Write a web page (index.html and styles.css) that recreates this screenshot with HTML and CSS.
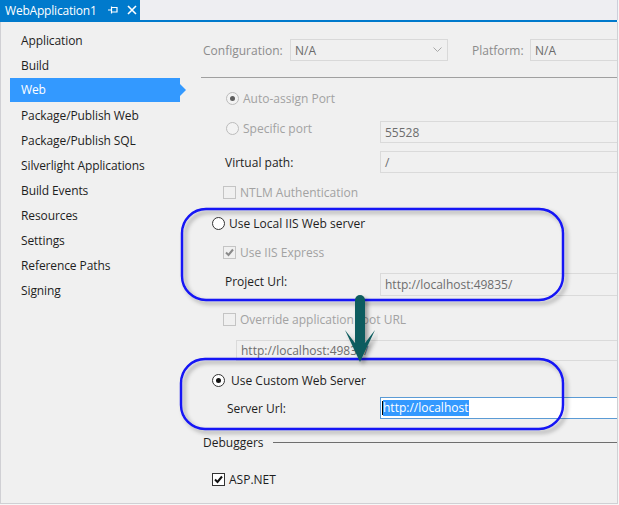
FILE: index.html
```html
<!DOCTYPE html>
<html>
<head>
<meta charset="utf-8">
<title>WebApplication1</title>
<link rel="stylesheet" href="styles.css">
</head>
<body>
<div class="page">
  <div class="tabbar">
    <div class="tab">
      <span class="tab-title">WebApplication1</span>
      <svg class="pin" width="10" height="10" viewBox="0 0 10 10"><path d="M0 5H3M3.5 1.5V8.5M4 2.5H9V7H4" fill="none" stroke="#fff" stroke-width="1.2"/></svg>
      <svg class="close" width="10" height="10" viewBox="0 0 10 10"><path d="M1 1L9 9M9 1L1 9" stroke="#fff" stroke-width="1.6"/></svg>
    </div>
  </div>
  <div class="tabline"></div>
  <div class="main">
    <nav class="side">
      <div class="item">Application</div>
      <div class="item">Build</div>
      <div class="item sel">Web</div>
      <div class="item">Package/Publish Web</div>
      <div class="item">Package/Publish SQL</div>
      <div class="item">Silverlight Applications</div>
      <div class="item">Build Events</div>
      <div class="item">Resources</div>
      <div class="item">Settings</div>
      <div class="item">Reference Paths</div>
      <div class="item">Signing</div>
    </nav>
    <section class="content">
      <div class="config">
        <span class="cfg-label">Configuration:</span>
        <div class="select cfg-select"><span>N/A</span>
          <svg width="9" height="6" viewBox="0 0 9 6"><path d="M0.5 0.5L4.5 4.5L8.5 0.5" fill="none" stroke="#a8a8a8" stroke-width="1"/></svg>
        </div>
        <span class="plat-label">Platform:</span>
        <div class="select plat-select"><span>N/A</span></div>
      </div>
      <div class="sep"></div>

      <div class="line m-auto ind-r"><span class="radio dis on"></span><span class="txt dis-t">Auto-assign Port</span></div>
      <div class="frow m-spec">
        <div class="line ind-r spec-l"><span class="radio dis"></span><span class="txt dis-t">Specific port</span></div>
        <div class="inp">55528</div>
      </div>
      <div class="frow m-virt">
        <div class="line ind-l">Virtual path:</div>
        <div class="inp">/</div>
      </div>
      <div class="line m-ntlm ind-c"><span class="check dis"></span><span class="txt2 dis-t">NTLM Authentication</span></div>
      <div class="line m-local ind-o"><span class="radio"></span><span class="txt">Use Local IIS Web server</span></div>
      <div class="line m-iis ind-c"><span class="check dis"><svg width="11" height="11" viewBox="0 0 11 11"><path d="M2 5.5L4.5 8L9 2.5" fill="none" stroke="#8a8a8a" stroke-width="2"/></svg></span><span class="txt2 dis-t">Use IIS Express</span></div>
      <div class="frow m-proj">
        <div class="line ind-l proj-l">Project Url:</div>
        <div class="inp tall">http://localhost:49835/</div>
      </div>
      <div class="line m-over ind-c"><span class="check dis"></span><span class="txt2 dis-t">Override application root URL</span></div>
      <div class="inp over-inp">http://localhost:49835/</div>
      <div class="line m-custom ind-o"><span class="radio on dark"></span><span class="txt3">Use Custom Web Server</span></div>
      <div class="frow m-server">
        <div class="line ind-s">Server Url:</div>
        <div class="inp active"><span class="caret"></span><span class="selected">http://localhost</span></div>
      </div>
      <div class="debug m-debug"><span>Debuggers</span><span class="dline"></span></div>
      <div class="line m-asp ind-a"><span class="check on"><svg width="11" height="11" viewBox="0 0 11 11"><path d="M2 5.5L4.5 8L9 2.5" fill="none" stroke="#111" stroke-width="2"/></svg></span><span class="txt">ASP.NET</span></div>
    </section>
  </div>
  <svg class="annot" width="619" height="505" viewBox="0 0 619 505">
    <defs>
      <filter id="sh" x="-10%" y="-20%" width="120%" height="140%">
        <feDropShadow dx="3" dy="3" stdDeviation="2" flood-color="#000" flood-opacity="0.35"/>
      </filter>
    </defs>
    <rect x="182" y="209" width="381" height="91" rx="24" fill="none" stroke="#1212f5" stroke-width="2.4" filter="url(#sh)"/>
    <rect x="181" y="359" width="382" height="70" rx="24" fill="none" stroke="#1212f5" stroke-width="2.4" filter="url(#sh)"/>
    <g filter="url(#sh)" fill="#0f5c5e">
      <rect x="355" y="295" width="10" height="52" rx="5"/>
      <path d="M355 343L345 330L360 362L375 330L365 343Z"/>
    </g>
  </svg>
</div>
</body>
</html>
```
FILE: styles.css
```css
* { box-sizing: border-box; margin: 0; padding: 0; }
body {
  width: 619px; height: 505px; overflow: hidden;
  background: #f7f7f7;
  font-family: "Open Sans", "Noto Sans", sans-serif;
  font-size: 12px; color: #1e1e1e;
}
.page { position: relative; width: 618px; height: 504px; background: #f0f0f0; }
.tabbar { height: 20px; background: #eeeef2; display: flex; border-right: 1px solid #cccedb; }
.tab { width: 140px; background: #007acc; color: #fff; display: flex; align-items: center; padding-left: 5px; }
.tab-title { font-size: 12px; letter-spacing: -0.2px; }
.pin { margin-left: 11px; }
.close { margin-left: 9px; }
.tabline { height: 2px; background: #007acc; margin-right: 1px; }
.main { display: flex; height: 482px; border: 1px solid #d0d0d4; border-top: 0; }
.side { width: 200px; flex: none; padding-top: 6px; }
.item { height: 25px; line-height: 25px; padding-left: 20px; white-space: nowrap; letter-spacing: -0.1px; }
.item.sel { position: relative; background: #3399ff; color: #fff; margin-left: 9px; padding-left: 11px; width: 170px; height: 24px; line-height: 24px; margin-bottom: 1px; }
.item.sel::after { content: ""; position: absolute; right: -6px; top: 6px; border-left: 6px solid #3399ff; border-top: 6px solid transparent; border-bottom: 6px solid transparent; }
.content { flex: 1; overflow: hidden; }

.config { margin-top: 17px; height: 22px; display: flex; align-items: center; padding-left: 2px; color: #8c8c8c; }
.cfg-label { width: 87px; flex: none; }
.select { height: 22px; border: 1px solid #d9d9d9; display: flex; align-items: center; padding-left: 4px; color: #6a6a6a; }
.cfg-select { width: 158px; justify-content: space-between; padding-right: 5px; }
.plat-label { margin-left: 24px; width: 58px; flex: none; }
.plat-select { flex: 1; margin-right: -4px; }
.sep { margin-top: 16px; height: 1px; background: #a0a0a0; }

.line { display: flex; align-items: center; height: 20px; white-space: nowrap; }
.frow { display: grid; grid-template-columns: 179px 1fr; align-items: center; }
.inp { height: 22px; border: 1px solid #dadada; margin-right: -4px; padding-left: 4px; display: flex; align-items: center; color: #6d6d6d; white-space: nowrap; overflow: hidden; }
.inp.tall { height: 23px; }
.inp.active { background: #fff; border-color: #5b9bd5; color: #fff; padding-left: 1px; }
.caret { width: 1px; height: 14px; background: #000; }
.selected { background: #3399ff; line-height: 16px; padding-right: 1px; }
.over-inp { margin-top: 11px; height: 21px; margin-left: 35px; }

.radio { width: 13px; height: 13px; border-radius: 50%; border: 1px solid #333; background: #fff; flex: none; display: flex; align-items: center; justify-content: center; }
.radio.dis { border-color: #bcbcbc; background: #f3f3f3; }
.radio.on::after { content: ""; width: 5px; height: 5px; border-radius: 50%; background: #5e5e5e; }
.radio.on.dark::after { background: #111; }
.check { width: 13px; height: 13px; border: 1px solid #333; background: #fff; flex: none; display: flex; align-items: center; justify-content: center; }
.check.dis { border-color: #c4c4c4; background: #f0f0f0; }
.txt { margin-left: 4px; }
.txt2 { margin-left: 4px; }
.txt3 { margin-left: 6px; }
.dis-t { color: #a2a2a2; }

.ind-r { padding-left: 25px; }
.ind-l { padding-left: 24px; }
.ind-c { padding-left: 22px; }
.ind-o { padding-left: 11px; }
.ind-s { padding-left: 26px; }
.ind-a { padding-left: 11px; }
.spec-l { margin-top: -8px; }
.proj-l { margin-top: -7px; }

.m-auto { margin-top: 10px; }
.m-spec { margin-top: 13px; }
.m-virt { margin-top: 8px; }
.m-ntlm { margin-top: 9px; }
.m-local { margin-top: 11px; }
.m-iis { margin-top: 9px; }
.m-proj { margin-top: 11px; }
.m-over { margin-top: 13px; }
.m-custom { margin-top: 9px; }
.m-server { margin-top: 7px; }
.m-debug { margin-top: 13px; }
.m-asp { margin-top: 17px; }

.debug { height: 20px; display: flex; align-items: center; padding-left: 2px; }
.dline { flex: 1; height: 1px; background: #6e6e6e; margin-left: 9px; }

.annot { position: absolute; left: 0; top: 0; pointer-events: none; }
```
